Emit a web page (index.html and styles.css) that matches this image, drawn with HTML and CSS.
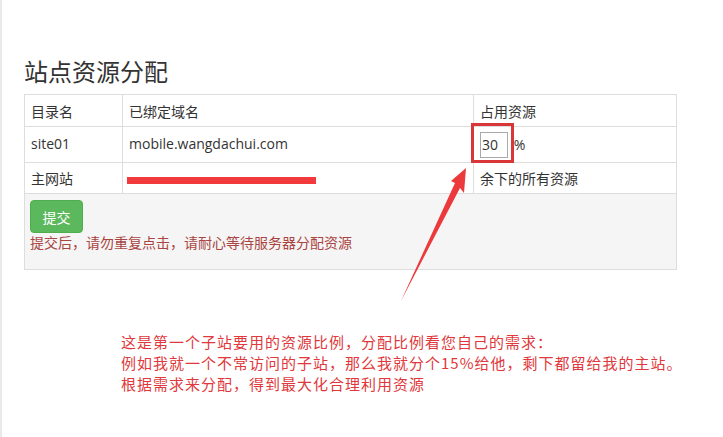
FILE: index.html
```html
<!DOCTYPE html>
<html lang="zh-CN">
<head>
  <meta charset="UTF-8" />
  <title>站点资源分配</title>
  <meta name="viewport" content="width=device-width, initial-scale=1.0" />
  <link rel="stylesheet" href="styles.css">
</head>
<body>
  <div class="page">
    <h1>站点资源分配</h1>
    <table class="res-table">
      <tr class="head-row">
        <td class="col-dir">目录名</td>
        <td class="col-domain">已绑定域名</td>
        <td class="col-res">占用资源</td>
      </tr>
      <tr class="site-row">
        <td class="raised">site01</td>
        <td class="raised">mobile.wangdachui.com</td>
        <td>
          <span class="mark"><input class="pct" type="text" value="30"></span>
          <span class="unit">%</span>
        </td>
      </tr>
      <tr class="main-row">
        <td>主网站</td>
        <td><span class="redact"></span></td>
        <td>余下的所有资源</td>
      </tr>
    </table>
    <div class="panel-foot">
      <button class="btn-submit">提交</button>
      <p class="warn">提交后，请勿重复点击，请耐心等待服务器分配资源</p>
    </div>

    <div class="note">
      这是第一个子站要用的资源比例，分配比例看您自己的需求：<br>
      例如我就一个不常访问的子站，那么我就分个15%给他，剩下都留给我的主站。<br>
      根据需求来分配，得到最大化合理利用资源
    </div>
  </div>

  <svg class="arrow" width="723" height="437" viewBox="0 0 723 437">
    <polygon points="466,168 451,181 455,183 401,301 460,188 464,193" fill="#ec3a3c" />
  </svg>
</body>
</html>
```

FILE: styles.css
```css
body {
  margin: 0;
  min-height: 437px;
  border-left: 2px solid #e9e9e9;
  font-family: "Open Sans", "Noto Sans CJK SC", sans-serif;
  font-size: 14px;
  color: #333;
  background: #fff;
  position: relative;
}
.page {
  padding: 59px 0 0 22px;
}
h1 {
  margin: 0 0 9px;
  font-size: 24px;
  line-height: 1.1;
  font-weight: normal;
  color: #333;
}
.res-table {
  width: 653px;
  border-collapse: collapse;
  table-layout: fixed;
}
.res-table td {
  border: 1px solid #ddd;
  padding: 0 6px;
  vertical-align: middle;
  white-space: nowrap;
}
.col-dir {
  width: 85px;
}
.col-domain {
  width: 338px;
}
.head-row td {
  height: 31px;
}
.site-row td {
  height: 35px;
}
.site-row td.raised {
  height: 32px;
  padding-bottom: 3px;
}
.main-row td {
  height: 30px;
}
.mark {
  position: relative;
  display: inline-block;
  vertical-align: middle;
}
.mark::before {
  content: "";
  position: absolute;
  left: -9px;
  top: -9px;
  right: -6px;
  bottom: -5px;
  border: 3px solid #d9363a;
}
.pct {
  display: block;
  width: 28px;
  height: 26px;
  box-sizing: border-box;
  border: 1px solid #a9a9a9;
  padding: 0 1px;
  font-family: "Open Sans", sans-serif;
  font-size: 14px;
  color: #333;
}
.unit {
  margin-left: 2px;
  vertical-align: middle;
}
.redact {
  display: inline-block;
  width: 189px;
  height: 7px;
  margin-left: -2px;
  background: #f2393b;
  vertical-align: middle;
}
.panel-foot {
  width: 641px;
  padding: 6px 5px 16px;
  background: #f5f5f5;
  border: 1px solid #ddd;
  border-top: none;
}
.btn-submit {
  display: block;
  width: 53px;
  height: 33px;
  padding: 0;
  font-family: "Noto Sans CJK SC", sans-serif;
  font-size: 14px;
  color: #fff;
  background: #5cb85c;
  border: 1px solid #4cae4c;
  border-radius: 4px;
}
.warn {
  margin: 0;
  line-height: 20px;
  color: #a94442;
}
.note {
  margin: 61px 0 0 97px;
  font-family: "Noto Sans CJK SC", sans-serif;
  font-size: 15px;
  letter-spacing: 1px;
  line-height: 21px;
  color: #e0383c;
}
.arrow {
  position: absolute;
  left: -2px;
  top: 0;
  pointer-events: none;
}
```
